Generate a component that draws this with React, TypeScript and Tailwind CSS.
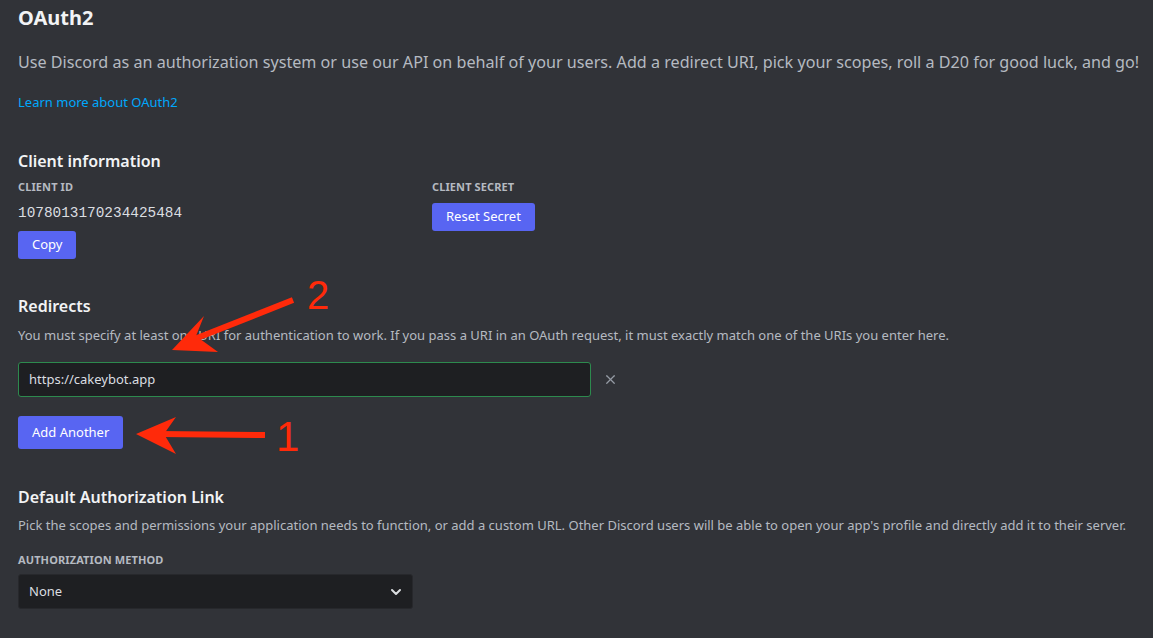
import { ChevronDown, X } from 'lucide-react';

const FONT = "font-['Noto_Sans',_'Open_Sans',_sans-serif]";

function Label({ children }: { children: React.ReactNode }) {
  return (
    <div className="text-[11px] leading-[14px] font-bold uppercase tracking-[0.01em] text-[#b5bac1]">
      {children}
    </div>
  );
}

function Button({ children, className = '' }: { children: React.ReactNode; className?: string }) {
  return (
    <button className={`rounded-[3px] bg-[#5865f2] px-[14px] text-[13px] text-white ${className}`}>
      {children}
    </button>
  );
}

// red annotation arrows laid over the page
function Annotations() {
  return (
    <svg className="pointer-events-none absolute left-0 top-0" width="1153" height="638">
      {/* arrow 2 */}
      <line x1="293" y1="300" x2="192" y2="340" stroke="#ff2a0a" strokeWidth="6" />
      <polygon points="172,350 204,316 196,336 218,352" fill="#ff2a0a" />
      <text x="307" y="309" fontFamily="Liberation Sans, Arial, sans-serif" fontSize="40" fill="#ff2a0a">2</text>
      {/* arrow 1 */}
      <line x1="265" y1="435" x2="160" y2="434" stroke="#ff2a0a" strokeWidth="6" />
      <polygon points="136,434 176,417 164,434 176,454" fill="#ff2a0a" />
      <text x="276" y="451" fontFamily="Liberation Sans, Arial, sans-serif" fontSize="42" fill="#ff2a0a">1</text>
    </svg>
  );
}

export default function App() {
  return (
    <div className={`relative h-[638px] w-[1153px] overflow-hidden bg-[#313338] px-[18px] ${FONT}`}>
      <h1 className="pt-[4px] text-[20px] font-bold leading-[28px] text-[#f2f3f5]">OAuth2</h1>
      <p className="mt-[18px] whitespace-nowrap text-[16.15px] leading-[24px] text-[#b5bac1]">
        Use Discord as an authorization system or use our API on behalf of your users. Add a redirect URI, pick your scopes, roll a D20 for good luck, and go!
      </p>
      <a className="mt-[20px] block text-[13px] leading-[16px] text-[#00a8fc]">Learn more about OAuth2</a>

      <h2 className="mt-[41px] text-[16px] font-semibold leading-[20px] text-[#f2f3f5]">Client information</h2>
      <div className="mt-[9px] flex">
        <div className="w-[414px]">
          <Label>CLIENT ID</Label>
          <div className="mt-[10px] font-['Liberation_Mono',_monospace] text-[14.4px] leading-[18px] text-[#dbdee1]">
            1078013170234425484
          </div>
          <Button className="mt-[9px] h-[28px]">Copy</Button>
        </div>
        <div>
          <Label>CLIENT SECRET</Label>
          <Button className="mt-[9px] h-[28px]">Reset Secret</Button>
        </div>
      </div>

      <h2 className="mt-[37px] text-[16px] font-semibold leading-[20px] text-[#f2f3f5]">Redirects</h2>
      <p className="mt-[10px] text-[13px] leading-[18px] text-[#b5bac1]">
        You must specify at least one URI for authentication to work. If you pass a URI in an OAuth request, it must exactly match one of the URIs you enter here.
      </p>
      <div className="mt-[18px] flex items-center">
        <div className="flex h-[35px] w-[573px] items-center rounded-[3px] border border-[#2d8a4e] bg-[#1e1f22] px-[10px] text-[13px] text-[#dbdee1]">
          https://cakeybot.app
        </div>
        <X className="ml-[12px] h-[15px] w-[15px] text-[#949ba4]" strokeWidth={2} />
      </div>
      <Button className="mt-[19px] h-[33px]">Add Another</Button>

      <h2 className="mt-[38px] text-[16px] font-semibold leading-[20px] text-[#f2f3f5]">Default Authorization Link</h2>
      <p className="mt-[9px] text-[13px] leading-[18px] text-[#b5bac1]">
        Pick the scopes and permissions your application needs to function, or add a custom URL. Other Discord users will be able to open your app's profile and directly add it to their server.
      </p>
      <div className="mt-[19px]">
        <Label>AUTHORIZATION METHOD</Label>
      </div>
      <div className="mt-[7px] flex h-[35px] w-[395px] items-center justify-between rounded-[3px] border border-[#27282c] bg-[#1e1f22] pl-[10px] pr-[8px] text-[13px] text-[#dbdee1]">
        <span>None</span>
        <ChevronDown className="h-[16px] w-[16px] text-[#dbdee1]" strokeWidth={3} />
      </div>

      <Annotations />
    </div>
  );
}
